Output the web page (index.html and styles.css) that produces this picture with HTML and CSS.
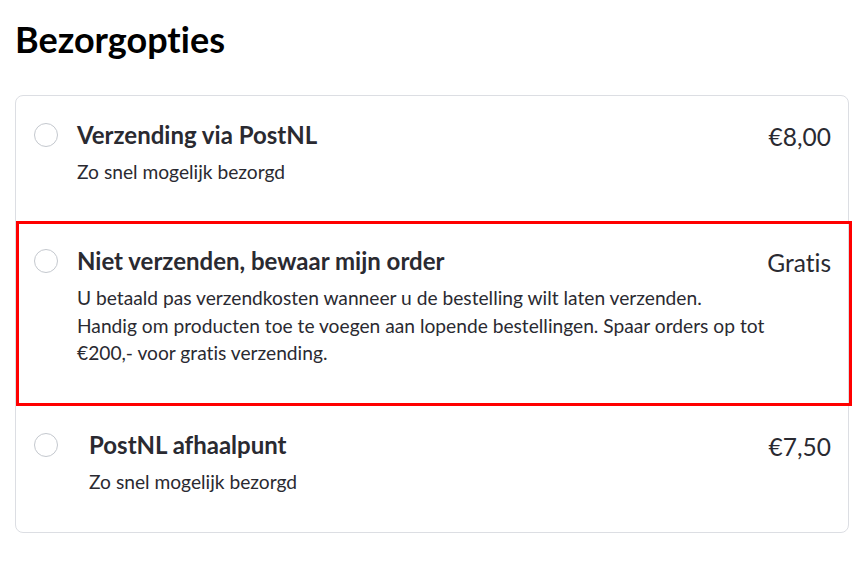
FILE: index.html
```html
<!DOCTYPE html>
<html lang="nl">
<head>
    <meta charset="UTF-8">
    <meta name="viewport" content="width=device-width, initial-scale=1.0">
    <title>Bezorgopties</title>
    <link rel="stylesheet" href="styles.css">
</head>
<body>
    <div class="page">
        <h1 class="title">Bezorgopties</h1>

        <div class="options">
            <label class="option">
                <span class="radio"></span>
                <div class="option-text">
                    <div class="option-name">Verzending via PostNL</div>
                    <div class="option-desc">Zo snel mogelijk bezorgd</div>
                </div>
                <div class="option-price">€8,00</div>
            </label>

            <label class="option highlight">
                <span class="radio"></span>
                <div class="option-text">
                    <div class="option-name">Niet verzenden, bewaar mijn order</div>
                    <div class="option-desc">U betaald pas verzendkosten wanneer u de bestelling wilt laten verzenden.<br>Handig om producten toe te voegen aan lopende bestellingen. Spaar orders op tot<br>€200,- voor gratis verzending.</div>
                </div>
                <div class="option-price">Gratis</div>
            </label>

            <label class="option">
                <span class="radio"></span>
                <div class="option-text indent">
                    <div class="option-name">PostNL afhaalpunt</div>
                    <div class="option-desc">Zo snel mogelijk bezorgd</div>
                </div>
                <div class="option-price">€7,50</div>
            </label>
        </div>
    </div>
</body>
</html>
```

FILE: styles.css
```css
* {
    margin: 0;
    padding: 0;
    box-sizing: border-box;
}

body {
    font-family: Lato, 'Open Sans', sans-serif;
    font-variant-ligatures: none;
    background: #ffffff;
    color: #2a2a31;
}

.page {
    padding: 18px 19px 0 15px;
}

.title {
    font-size: 36px;
    font-weight: 700;
    line-height: 1.2;
    color: #000000;
    margin-bottom: 34px;
}

.options {
    border: 1px solid #dcdee3;
    border-radius: 8px;
}

.option {
    position: relative;
    display: flex;
    align-items: flex-start;
    padding: 25px 17px 37px 18px;
    cursor: pointer;
}

.highlight {
    padding-bottom: 39px;
}

.highlight::after {
    content: '';
    position: absolute;
    top: -1px;
    left: 0;
    right: -4px;
    bottom: 0;
    border: 3px solid #ff0000;
    pointer-events: none;
}

.radio {
    width: 24px;
    height: 24px;
    border: 1px solid #c4c8ce;
    border-radius: 50%;
    flex-shrink: 0;
    margin-top: 2px;
    margin-right: 19px;
}

.option-text {
    flex: 1;
}

.option-text.indent {
    padding-left: 12px;
}

.option-name {
    font-size: 24px;
    font-weight: 700;
    line-height: 1.2;
    margin-bottom: 8px;
}

.option-desc {
    font-size: 19.2px;
    line-height: 27.5px;
}

.option-price {
    font-size: 24.5px;
    line-height: 1.2;
    margin-top: 1px;
    white-space: nowrap;
}
```
